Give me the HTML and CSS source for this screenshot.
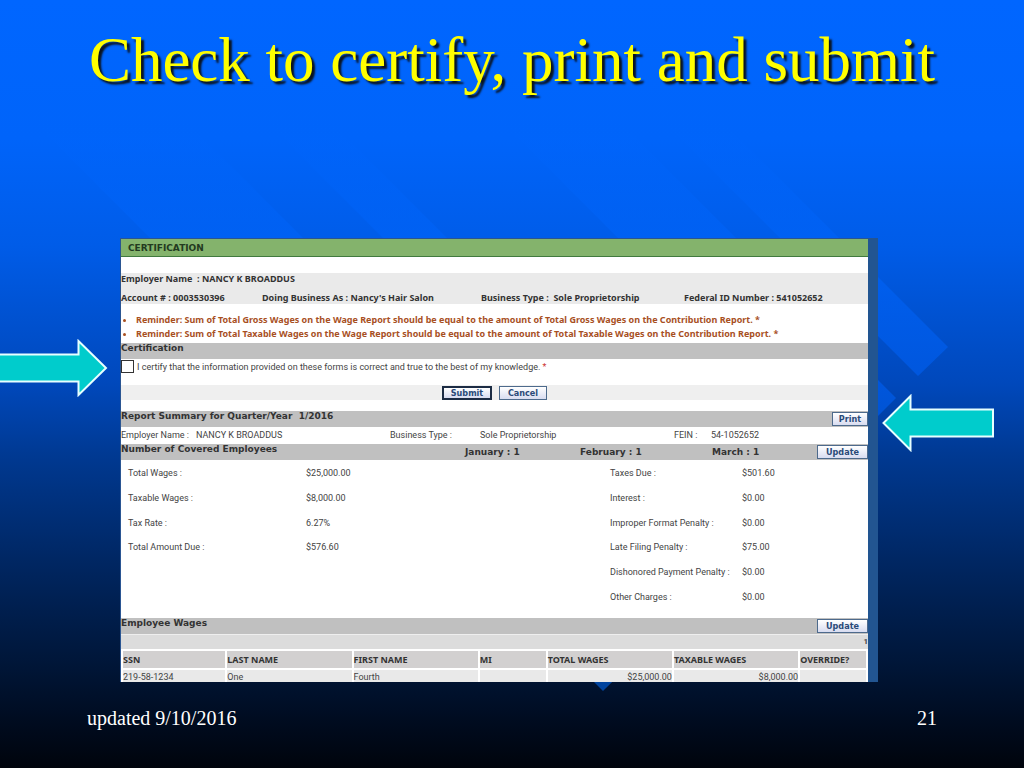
FILE: index.html
```html
<!DOCTYPE html>
<html lang="en">
<head>
  <meta charset="UTF-8" />
  <meta name="viewport" content="width=device-width, initial-scale=1.0"/>
  <title>Check to certify, print and submit</title>
  <link rel="stylesheet" href="styles.css">
</head>
<body>

<div class="slide">
  <!-- diagonal bands behind everything -->
  <svg class="bands" viewBox="0 0 1024 768" preserveAspectRatio="none" aria-hidden="true">
    <defs>
      <linearGradient id="fade" gradientUnits="userSpaceOnUse" x1="0" y1="110" x2="0" y2="700">
        <stop offset="0" stop-color="#0066ff" stop-opacity="0"/>
        <stop offset="0.25" stop-color="#0064fa" stop-opacity="0.6"/>
        <stop offset="0.45" stop-color="#005ae6" stop-opacity="0.8"/>
        <stop offset="1" stop-color="#0048a8" stop-opacity="0.9"/>
      </linearGradient>
    </defs>
    <path fill="url(#fade)" d="M22 110 L175 110 L680 615 L603 691 Z"/>
    <path fill="url(#fade)" d="M255 110 L319 110 L500 291 L468 323 Z"/>
    <path fill="url(#fade)" d="M490 110 L608 110 L896 398 L837 457 Z"/>
    <path fill="url(#fade)" d="M652 110 L711 110 L948 347 L918 376 Z"/>
  </svg>

  <h1>Check to certify, print and submit</h1>

  <form class="panel">
    <h2 class="panel-title">CERTIFICATION</h2>

    <div class="employer">
      <div>Employer Name &nbsp;: NANCY K BROADDUS</div>
      <div class="employer-row">
        <span>Account # : 0003530396</span>
        <span>Doing Business As : Nancy's Hair Salon</span>
        <span>Business Type :&nbsp; Sole Proprietorship</span>
        <span>Federal ID Number : 541052652</span>
      </div>
    </div>

    <ul class="reminders">
      <li>Reminder: Sum of Total Gross Wages on the Wage Report should be equal to the amount of Total Gross Wages on the Contribution Report. *</li>
      <li>Reminder: Sum of Total Taxable Wages on the Wage Report should be equal to the amount of Total Taxable Wages on the Contribution Report. *</li>
    </ul>

    <div class="bar"><h3>Certification</h3></div>
    <div class="certify">
      <input type="checkbox" id="certify" />
      <label for="certify">I certify that the information provided on these forms is correct and true to the best of my knowledge. <span class="required">*</span></label>
    </div>
    <div class="actions">
      <button type="button" class="primary">Submit</button>
      <button type="button">Cancel</button>
    </div>

    <div class="bar">
      <h3>Report Summary for Quarter/Year &nbsp;1/2016</h3>
      <button type="button" class="small">Print</button>
    </div>
    <div class="info-row">
      <span>Employer Name :</span>
      <span>NANCY K BROADDUS</span>
      <span>Business Type :</span>
      <span>Sole Proprietorship</span>
      <span>FEIN :</span>
      <span>54-1052652</span>
    </div>

    <div class="bar months">
      <h3>Number of Covered Employees</h3>
      <span>January : 1</span>
      <span>February : 1</span>
      <span>March : 1</span>
      <button type="button">Update</button>
    </div>
    <dl class="totals">
      <dt>Total Wages :</dt><dd>$25,000.00</dd>
      <dt>Taxes Due :</dt><dd>$501.60</dd>
      <dt>Taxable Wages :</dt><dd>$8,000.00</dd>
      <dt>Interest :</dt><dd>$0.00</dd>
      <dt>Tax Rate :</dt><dd>6.27%</dd>
      <dt>Improper Format Penalty :</dt><dd>$0.00</dd>
      <dt>Total Amount Due :</dt><dd>$576.60</dd>
      <dt>Late Filing Penalty :</dt><dd>$75.00</dd>
      <dt class="right">Dishonored Payment Penalty :</dt><dd>$0.00</dd>
      <dt class="right">Other Charges :</dt><dd>$0.00</dd>
    </dl>

    <div class="bar">
      <h3>Employee Wages</h3>
      <button type="button">Update</button>
    </div>
    <div class="pager">1</div>
    <table class="wages">
      <thead>
        <tr>
          <th class="col-ssn">SSN</th>
          <th class="col-name">LAST NAME</th>
          <th class="col-name">FIRST NAME</th>
          <th class="col-mi">MI</th>
          <th class="col-name">TOTAL WAGES</th>
          <th class="col-name">TAXABLE WAGES</th>
          <th class="col-mi">OVERRIDE?</th>
        </tr>
      </thead>
      <tbody>
        <tr>
          <td>219-58-1234</td>
          <td>One</td>
          <td>Fourth</td>
          <td></td>
          <td class="num">$25,000.00</td>
          <td class="num">$8,000.00</td>
          <td></td>
        </tr>
      </tbody>
    </table>
  </form>

  <footer>
    <span>updated 9/10/2016</span>
    <span>21</span>
  </footer>

  <!-- callout arrows -->
  <svg class="arrow arrow-left" width="108" height="58" viewBox="0 0 108 58" aria-hidden="true">
    <path d="M-2 15.500 H78.500 V2 L106 29 L78.500 56 V42.500 H-2 Z"/>
  </svg>
  <svg class="arrow arrow-right" width="112" height="58" viewBox="0 0 112 58" aria-hidden="true">
    <path d="M111 15.500 H28.500 V2 L1.500 29 L28.500 56 V42.500 H111 Z"/>
  </svg>
</div>

</body>
</html>
```
FILE: styles.css
```css
* {
  box-sizing: border-box;
}
body {
  margin: 0;
  font-family: Roboto, sans-serif;
}
.slide {
  position: relative;
  display: flex;
  flex-direction: column;
  min-height: 100vh;
  overflow: hidden;
  background: linear-gradient(#0066ff 0%, #0064fa 18%, #005ce8 32%, #0048bb 50%, #00388f 60%, #00245c 75%, #001433 88%, #000a1c 95%, #00040c 100%);
}
.bands {
  position: absolute;
  inset: 0;
  width: 100%;
  height: 100%;
}
h1, h2, h3, ul, dl, dd {
  margin: 0;
  padding: 0;
}
h1 {
  position: relative;
  padding-top: 24px;
  height: 238px;
  font: 63px/72px "Liberation Serif", serif;
  text-align: center;
  color: #ffff00;
  text-shadow: 3px 3px 2px #0a1420;
}

/* certification panel */
.panel {
  position: relative;
  overflow: hidden;
  margin: 0 146px 0 120px;
  border: 1px solid #2a5592;
  border-right: 10px solid #225591;
  border-bottom: 0;
  background-color: #fff;
  font-size: 9px;
  line-height: 12px;
  color: #444;
}
.panel-title {
  height: 18px;
  padding-left: 7px;
  background-color: #84b36c;
  border-bottom: 1px solid #417a3f;
  font: bold 9px/18px "DejaVu Sans", sans-serif;
  color: #233a20;
}
.employer {
  display: flex;
  flex-direction: column;
  justify-content: space-between;
  height: 31px;
  margin-top: 16px;
  background-color: #eaeaea;
  font-family: "Noto Sans", sans-serif;
  font-weight: bold;
  color: #333;
}
.employer-row {
  display: grid;
  grid-template-columns: 141fr 219fr 203fr 184fr;
}
.reminders {
  padding: 9px 0 2px 15px;
  font-family: "Noto Sans", sans-serif;
  line-height: 14px;
  font-weight: bold;
  color: #a8501f;
}
.bar {
  display: flex;
  justify-content: space-between;
  height: 16px;
  background-color: #c0c0c0;
  font-family: "DejaVu Sans", sans-serif;
  color: #333;
}
.bar h3 {
  font-size: 9px;
  line-height: 11px;
}
.certify {
  display: flex;
  gap: 3px;
  height: 26px;
  padding-top: 1px;
}
.certify input {
  appearance: none;
  width: 13px;
  height: 13px;
  margin: 0;
  border: 1px solid #333;
  background-color: #fff;
}
.certify label {
  padding-top: 1px;
}
.required {
  color: #c33;
}
.actions {
  display: flex;
  justify-content: center;
  gap: 7px;
  height: 15px;
  margin-bottom: 11px;
  background-color: #efefef;
}
button {
  height: 14px;
  min-width: 48px;
  margin-top: 1px;
  padding: 0 5px;
  border: 1px solid #4d6a8c;
  background: linear-gradient(#fff, #d8dcf0);
  font: bold 9px/11px "DejaVu Sans Condensed", "DejaVu Sans", sans-serif;
  color: #2a4a78;
}
button.primary {
  min-width: 50px;
  border: 2px solid #1c2c44;
  line-height: 9px;
}
.bar button {
  min-width: 51px;
}
.bar button.small {
  min-width: 36px;
}
.info-row {
  display: grid;
  grid-template-columns: 75fr 194fr 90fr 194fr 37fr 157fr;
  height: 17px;
  line-height: 16px;
}
.months {
  display: grid;
  grid-template-columns: 344fr 115fr 132fr 105fr auto;
  font-weight: bold;
}
.months span {
  padding-top: 2px;
}
.totals {
  display: grid;
  grid-template-columns: 178fr 304fr 132fr 126fr;
  grid-auto-rows: 1fr;
  align-items: center;
  height: 148px;
  margin: 1px 0 9px 7px;
}
.totals .right {
  grid-column: 3;
}
.pager {
  height: 15px;
  border-top: 1px solid #eee;
  background-color: #dcdcdc;
  font-size: 8px;
  line-height: 14px;
  font-weight: bold;
  text-align: right;
}
.wages {
  width: 100%;
  margin-bottom: -4px;
  table-layout: fixed;
  border-spacing: 2px;
}
.wages th, .wages td {
  padding: 0;
  text-align: left;
}
.wages th {
  height: 17px;
  background-color: #d2d0d0;
  font-family: "Noto Sans", sans-serif;
  color: #333;
}
.wages td {
  height: 14px;
  background-color: #e9e9e9;
}
.wages .num {
  text-align: right;
}
.col-ssn {
  width: 14%;
}
.col-name {
  width: 17%;
}
.col-mi {
  width: 9%;
}

footer {
  position: relative;
  display: flex;
  justify-content: space-between;
  padding: 24px 87px 0;
  font: 20px/24px "Liberation Serif", serif;
  color: #fff;
}

/* arrows pointing at the controls */
.arrow {
  position: absolute;
  fill: #00cccc;
  stroke: #e6ffff;
  stroke-width: 2;
}
.arrow-left {
  left: 0;
  top: 339px;
}
.arrow-right {
  right: 30px;
  top: 394px;
}
```
